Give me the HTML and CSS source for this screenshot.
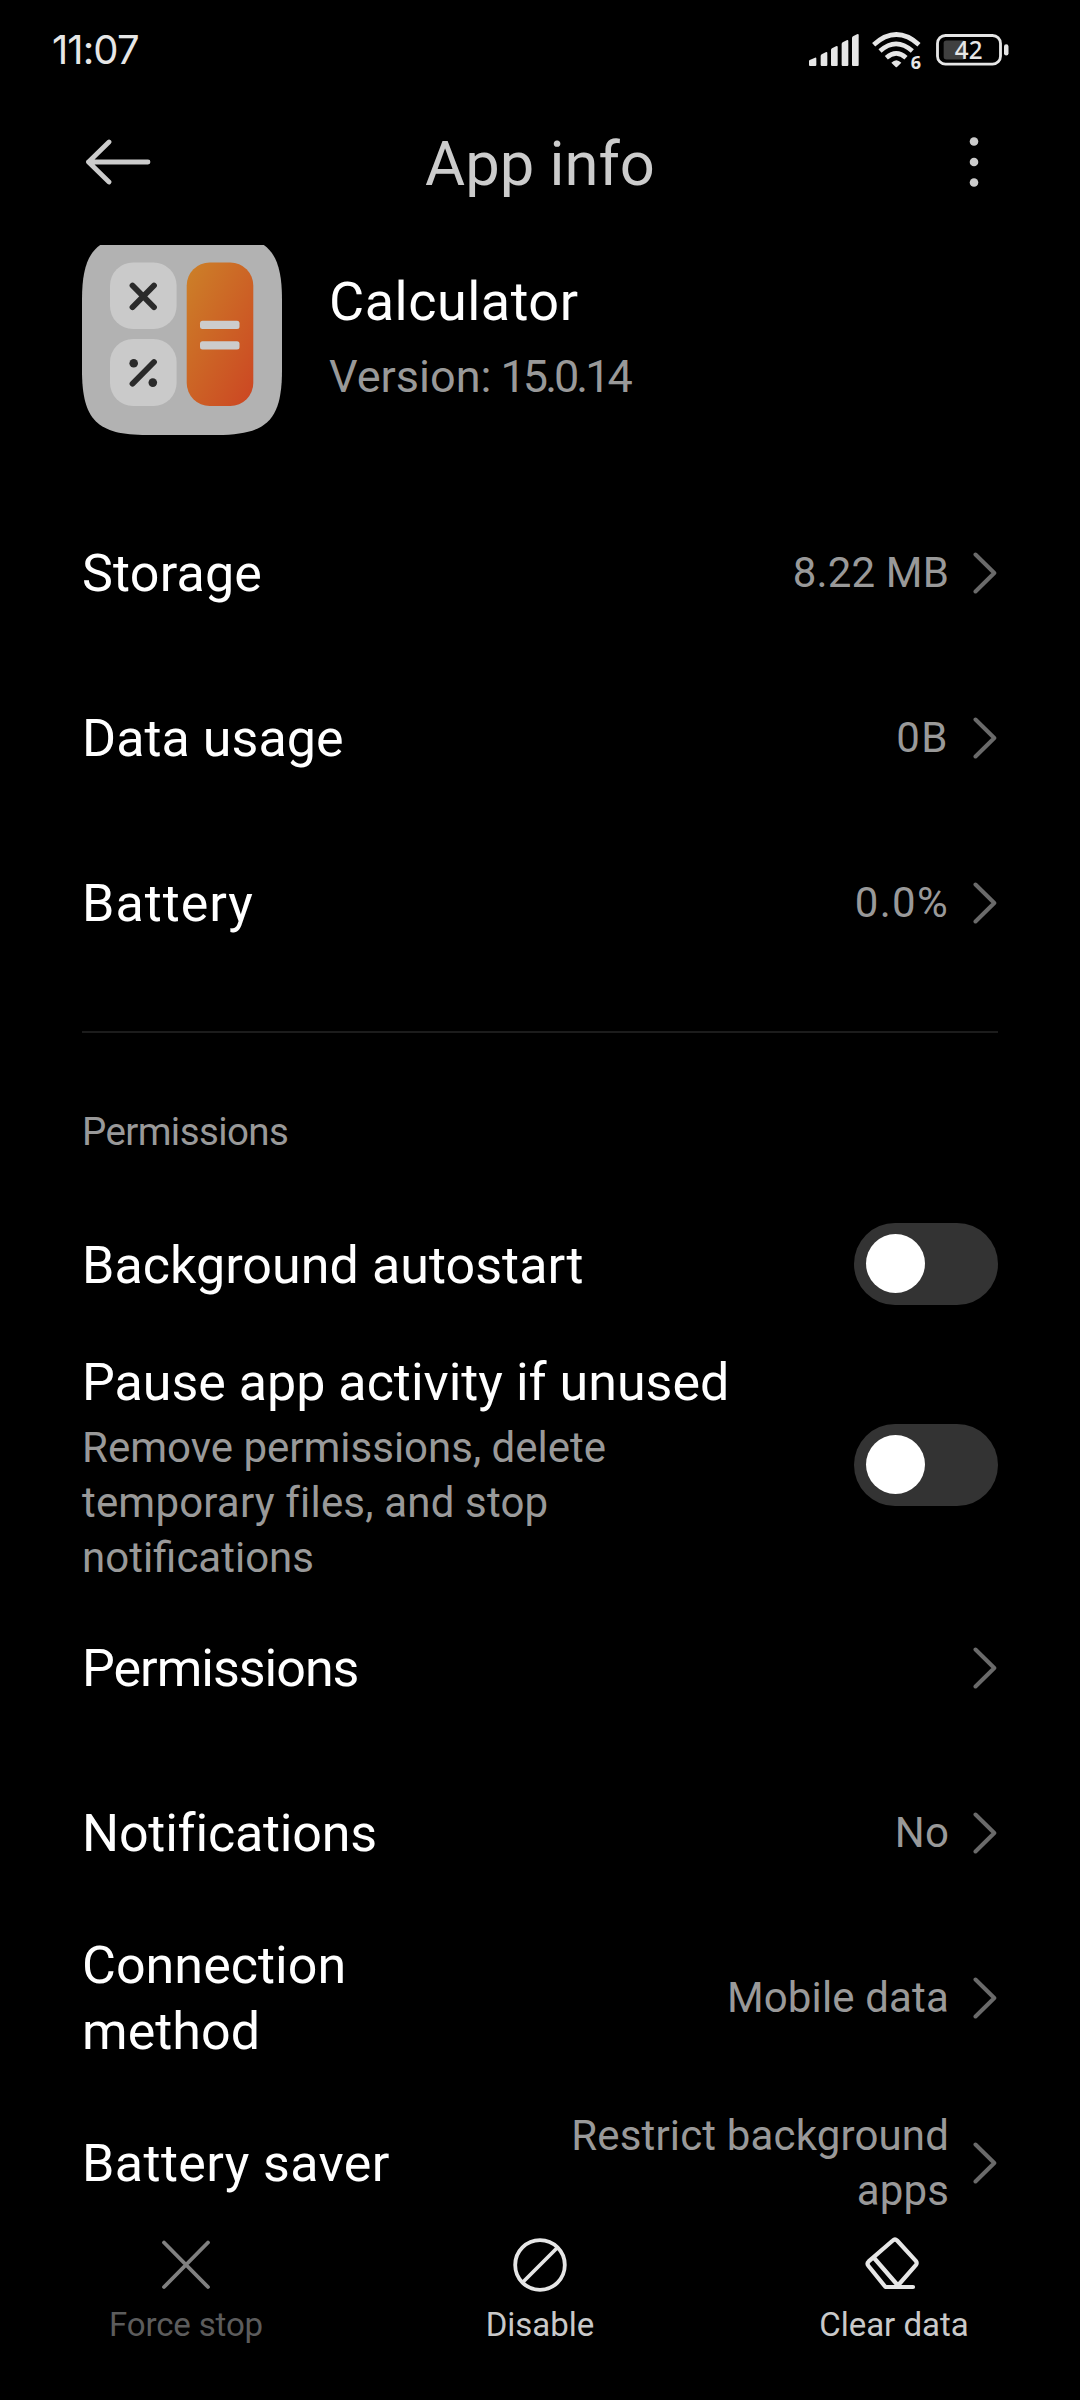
FILE: index.html
```html
<!DOCTYPE html>
<html lang="en">
<head>
<meta charset="utf-8">
<title>App info</title>
<link rel="stylesheet" href="styles.css">
</head>
<body>
<svg class="defs" aria-hidden="true">
  <symbol id="chevron" viewBox="0 0 24 42"><path d="M2.5 2.5 21.3 21 2.5 39.5" fill="none" stroke="#6a6a6a" stroke-width="4" stroke-linecap="round" stroke-linejoin="round"/></symbol>
</svg>
<div class="screen">
  <div class="status">
    <span class="clock">11:07</span>
    <div class="indicators">
      <svg class="signal" viewBox="86 66 150 105" fill="#e6e6e6">
        <path d="M86 153q0-2 2-3l16-7q4-1 4 3v19q0 3-3 3H89q-3 0-3-3z"/>
        <path d="M121 138q0-3 3-5l12-6q5-2 5 2v36q0 3-3 3h-14q-3 0-3-3z"/>
        <path d="M152 120q0-3 3-5l12-6q5-2 5 2v54q0 3-3 3h-14q-3 0-3-3z"/>
        <path d="M184 102q0-3 3-5l12-6q5-2 5 2v72q0 3-3 3h-14q-3 0-3-3z"/>
        <path d="M215 84q0-3 3-5l12-6q5-2 5 2v90q0 3-3 3h-14q-3 0-3-3z"/>
      </svg>
      <svg class="wifi" viewBox="276 63 153 135">
        <g fill="none" stroke="#e6e6e6" stroke-width="14">
          <path d="M281 104q68-61 136 0"/>
          <path d="M300 123q48-43 97 0"/>
          <path d="M319 143q30-26 59 0"/>
        </g>
        <path d="M334 158q15-15 30 0l-13 13q-2 2-4 0z" fill="#e6e6e6"/>
        <text x="392" y="177" font-size="54" font-weight="700" fill="#e6e6e6">6</text>
      </svg>
      <svg class="battery" viewBox="468 49.500 219 138">
        <rect x="491" y="90" width="67" height="57" rx="8" fill="#404040"/>
        <rect x="472.500" y="75" width="189" height="86" rx="24" fill="none" stroke="#e6e6e6" stroke-width="8.500"/>
        <rect x="672" y="101" width="13.500" height="34" rx="6.700" fill="#e6e6e6"/>
        <text x="566" y="144" font-size="75" font-weight="500" text-anchor="middle" textLength="83" lengthAdjust="spacingAndGlyphs" fill="#e6e6e6">42</text>
      </svg>
    </div>
  </div>

  <div class="toolbar">
    <svg class="back" viewBox="0 0 66 46"><path d="M24 3 3.500 23 24 43M3.500 23H63" fill="none" stroke="#ccc" stroke-width="4.800" stroke-linecap="round" stroke-linejoin="round"/></svg>
    <h1 class="title">App info</h1>
    <svg class="more" viewBox="0 0 10 52" fill="#ccc"><circle cx="5" cy="5.500" r="4.300"/><circle cx="5" cy="26" r="4.300"/><circle cx="5" cy="46.500" r="4.300"/></svg>
  </div>

  <div class="scroll">
    <div class="app">
      <svg class="app-icon" viewBox="0 0 200 200">
        <defs><linearGradient id="eq" x1="0" y1="0" x2=".9" y2="1"><stop offset="0" stop-color="#cc8128"/><stop offset="1" stop-color="#cc4823"/></linearGradient></defs>
        <path d="M0 65C0 15 15 0 65 0H135C185 0 200 15 200 65V135C200 185 185 200 135 200H65C15 200 0 185 0 135z" fill="#b2b2b2"/>
        <rect x="28" y="27.500" width="66.600" height="66.600" rx="23" fill="#cacaca"/>
        <rect x="28" y="104" width="66.600" height="67" rx="23" fill="#cacaca"/>
        <rect x="104.700" y="27.500" width="66.600" height="143.500" rx="23" fill="url(#eq)"/>
        <path d="M50.500 50.500 72 72.200M72 50.500 50.500 72.200M72 127 50.500 148.700" stroke="#2a2a2a" stroke-width="5.800" stroke-linecap="round"/>
        <circle cx="51.700" cy="128.300" r="4.300" fill="#2a2a2a"/><circle cx="70.800" cy="147.600" r="4.300" fill="#2a2a2a"/>
        <rect x="118" y="85.700" width="39.500" height="8.300" rx="2.500" fill="#ccc"/>
        <rect x="118" y="106.200" width="39.500" height="8.300" rx="2.500" fill="#ccc"/>
      </svg>
      <div class="app-text">
        <div class="app-name">Calculator</div>
        <div class="app-version">Version: <span class="number">15.0.14</span></div>
      </div>
    </div>

    <div class="row"><span class="label label-storage">Storage</span><span class="value">8.22 MB</span><svg class="chevron"><use href="#chevron"/></svg></div>
    <div class="row"><span class="label">Data usage</span><span class="value value-loose">0B</span><svg class="chevron"><use href="#chevron"/></svg></div>
    <div class="row"><span class="label label-wide">Battery</span><span class="value value-wide">0.0%</span><svg class="chevron"><use href="#chevron"/></svg></div>

    <hr class="divider">
    <h2 class="section">Permissions</h2>

    <div class="row row-toggle"><span class="label">Background autostart</span><span class="toggle"></span></div>
    <div class="row row-tall row-toggle">
      <div class="stack">
        <div class="label">Pause app activity if unused</div>
        <div class="summary">Remove permissions, delete<br><span class="summary-loose">temporary files, and stop</span><br>notifications</div>
      </div>
      <span class="toggle"></span>
    </div>
    <div class="row"><span class="label label-tight">Permissions</span><svg class="chevron"><use href="#chevron"/></svg></div>
    <div class="row"><span class="label label-notify">Notifications</span><span class="value">No</span><svg class="chevron"><use href="#chevron"/></svg></div>
    <div class="row"><span class="label">Connection<br>method</span><span class="value">Mobile data</span><svg class="chevron"><use href="#chevron"/></svg></div>
    <div class="row"><span class="label label-saver">Battery saver</span><span class="value">Restrict background<br>apps</span><svg class="chevron"><use href="#chevron"/></svg></div>
  </div>

  <div class="actions">
    <div class="action action-off">
      <svg class="action-icon" viewBox="0 0 60 60"><path d="M8 7.500 52 52M52 7.500 8 52" stroke="#808080" stroke-width="3.800" stroke-linecap="round"/></svg>
      <span>Force stop</span>
    </div>
    <div class="action">
      <svg class="action-icon" viewBox="0 0 60 60" fill="none" stroke="#e6e6e6" stroke-width="3.800"><circle cx="30" cy="30" r="24.800"/><path d="M12.500 47.500 47.500 12.500"/></svg>
      <span>Disable</span>
    </div>
    <div class="action">
      <svg class="action-icon" viewBox="1.500 0.500 60 60" fill="none" stroke="#e6e6e6" stroke-width="4.200" stroke-linecap="round" stroke-linejoin="round"><path d="M35 51.500 53.300 30.600Q55 28.500 53.300 26.400L34.600 6Q32.500 4 30.300 6L6.200 26.900Q4 29 6 31.500L23 52.500H50.500M12 24 35 50.500"/></svg>
      <span>Clear data</span>
    </div>
  </div>
</div>
</body>
</html>
```
FILE: styles.css
```css
* { box-sizing: border-box; }
body { margin: 0; background: #000; color: #fff; font-family: Roboto, "Noto Sans", sans-serif; }
svg { display: block; flex: none; }
.defs { display: none; }
.screen { width: 1080px; height: 2400px; display: flex; flex-direction: column; overflow: hidden; }

.status { height: 99px; display: flex; align-items: center; justify-content: space-between; padding: 0 71px 0 52px; color: #e6e6e6; }
.clock { font-family: Inter, sans-serif; font-size: 40px; letter-spacing: -0.9px; }
.indicators { display: flex; align-items: center; font-family: "Noto Sans", sans-serif; }
.signal { width: 50px; height: 35px; margin-right: 13px; }
.wifi { width: 51px; height: 45px; margin: 8px 13px 0 0; }
.battery { width: 73px; height: 46px; }

.toolbar { height: 126px; margin-bottom: 20px; padding: 0 101px 0 85px; display: grid; grid-template-columns: 66px 1fr 10px; align-items: center; }
.back { width: 66px; height: 46px; }
.more { width: 10px; height: 52px; }
.title { margin: 3px 0 0; padding-right: 40px; text-align: center; font-size: 61.5px; line-height: 80px; font-weight: 400; color: #ccc; }

.scroll { height: 1977px; overflow: hidden; padding: 0 82px; }
.app { height: 200px; margin: -10px 0 55px; display: flex; gap: 47px; }
.app-icon { width: 200px; height: 200px; }
.app-text { padding-top: 31px; display: flex; flex-direction: column; gap: 11px; }
.app-name { font-size: 54px; line-height: 72px; letter-spacing: 0.5px; }
.app-version { font-size: 45px; line-height: 56px; word-spacing: -2px; color: #999; }
.number { letter-spacing: -3px; }

.row { height: 165px; display: flex; align-items: center; }
.row-tall { height: 238px; }
.label { flex: none; margin-top: 2px; font-size: 52px; line-height: 66px; letter-spacing: 0.05px; }
.label-storage { letter-spacing: 0.2px; }
.label-wide { letter-spacing: 1px; }
.label-saver { letter-spacing: 0.4px; }
.label-tight { letter-spacing: -1px; }
.label-notify { letter-spacing: -0.2px; }
.value { margin: 0 0 0 auto; font-size: 42px; line-height: 55px; letter-spacing: 0.15px; text-align: right; color: #999; }
.value-loose { letter-spacing: 1.5px; }
.value-wide { letter-spacing: 1.3px; }
.chevron { width: 24px; height: 42px; margin: 0 1px 0 24px; }
.label + .chevron { margin-left: auto; }
.row-toggle > .label { margin-top: 3px; }
.stack { padding-top: 3px; }
.stack .label { margin: 0 0 4px; letter-spacing: 0; }
.summary { font-size: 42px; line-height: 55px; color: #999; }
.summary-loose { letter-spacing: 0.18px; }

.toggle { flex: none; width: 144px; height: 82px; margin: -2px 0 0 auto; border-radius: 41px; background: #333; padding: 11px 12px; }
.toggle::before { content: ""; display: block; width: 59px; height: 59px; border-radius: 50%; background: #fff; }

.divider { height: 2px; margin: 46px 0 73px; border: 0; background: #1c1c1c; }
.section { margin: 0 0 24px; font-size: 38.5px; line-height: 52px; letter-spacing: -0.6px; font-weight: 400; color: #999; }

.actions { flex: 1; padding: 13px 9px 0; display: grid; grid-template-columns: repeat(3, 354px); }
.action { display: flex; flex-direction: column; align-items: center; gap: 10px; font-size: 33px; line-height: 40px; color: #c9c9c9; }
.action-off { color: #5c5c5c; letter-spacing: -0.15px; }
.action-icon { width: 60px; height: 60px; }
```
